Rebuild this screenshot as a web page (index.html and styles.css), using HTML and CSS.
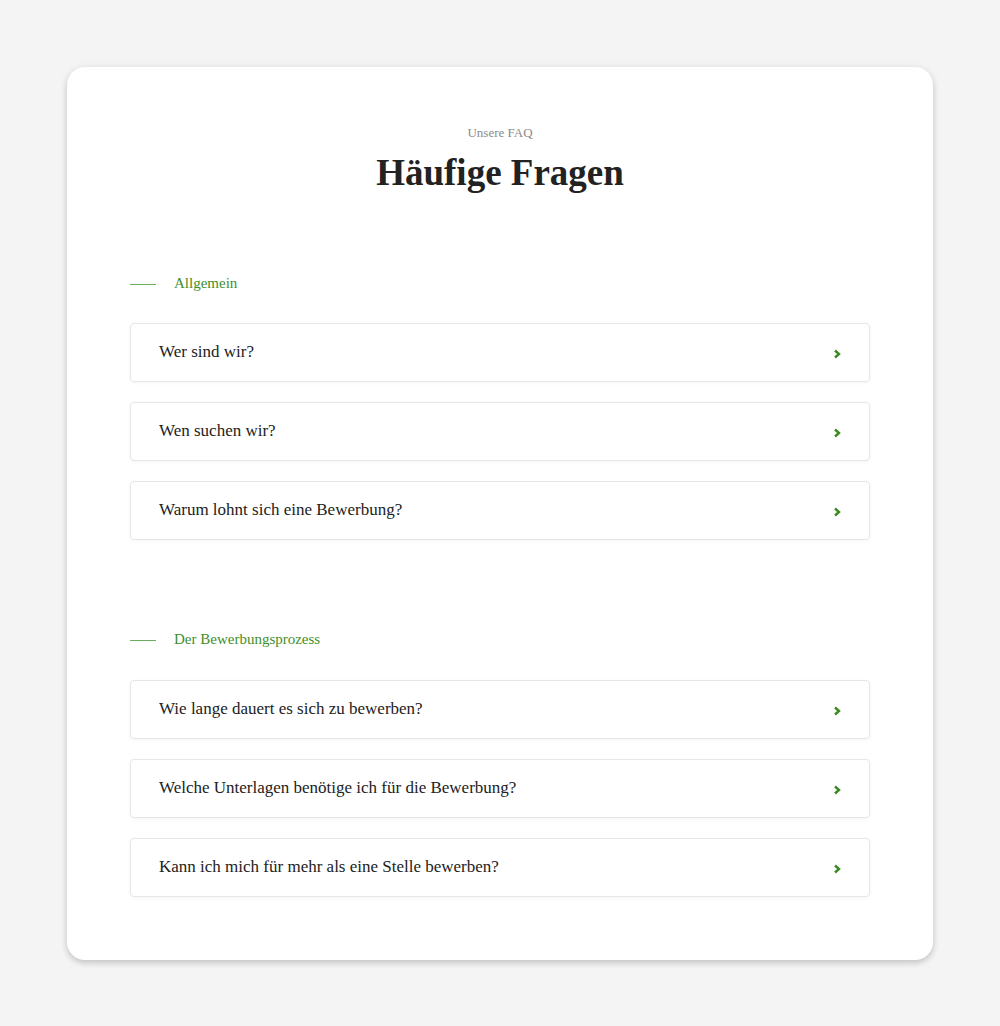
FILE: index.html
```html
<!DOCTYPE html>
<html>
<head>
    <title>FAQ</title>
    <meta name="viewport" content="width=device-width, initial-scale=1.0">
    <link rel="stylesheet" href="styles.css">
</head>
<body>
    <div class="card">
        <p class="eyebrow">Unsere FAQ</p>
        <h1>Häufige Fragen</h1>

        <section class="group">
            <div class="group-title"><span class="line"></span>Allgemein</div>
            <div class="item"><span>Wer sind wir?</span><svg class="chev" viewBox="0 0 8 10"><polyline points="2,1.5 6,5 2,8.5"/></svg></div>
            <div class="item"><span>Wen suchen wir?</span><svg class="chev" viewBox="0 0 8 10"><polyline points="2,1.5 6,5 2,8.5"/></svg></div>
            <div class="item"><span>Warum lohnt sich eine Bewerbung?</span><svg class="chev" viewBox="0 0 8 10"><polyline points="2,1.5 6,5 2,8.5"/></svg></div>
        </section>

        <section class="group second">
            <div class="group-title"><span class="line"></span>Der Bewerbungsprozess</div>
            <div class="item"><span>Wie lange dauert es sich zu bewerben?</span><svg class="chev" viewBox="0 0 8 10"><polyline points="2,1.5 6,5 2,8.5"/></svg></div>
            <div class="item"><span>Welche Unterlagen benötige ich für die Bewerbung?</span><svg class="chev" viewBox="0 0 8 10"><polyline points="2,1.5 6,5 2,8.5"/></svg></div>
            <div class="item"><span>Kann ich mich für mehr als eine Stelle bewerben?</span><svg class="chev" viewBox="0 0 8 10"><polyline points="2,1.5 6,5 2,8.5"/></svg></div>
        </section>
    </div>
</body>
</html>
```

FILE: styles.css
```css
body {
    background-color: #f4f4f4;
    font-family: 'Liberation Serif', serif;
    color: #222;
    margin: 0;
    padding: 67px 67px;
}

.card {
    background-color: white;
    border-radius: 18px;
    padding: 58px 63px 63px;
    box-shadow: 0 3px 6px rgba(0, 0, 0, 0.18), 0 0 12px rgba(0, 0, 0, 0.04);
}

.eyebrow {
    margin: 0;
    text-align: center;
    font-size: 13px;
    line-height: 16px;
    color: #8a8a8a;
}

h1 {
    margin: 10px 0 0;
    text-align: center;
    font-size: 37px;
    line-height: 44px;
    font-weight: bold;
    color: #222;
}

.group {
    margin-top: 78px;
}

.group.second {
    margin-top: 89px;
}

.group-title {
    display: flex;
    align-items: center;
    font-size: 15px;
    line-height: 20px;
    color: #3f8f2c;
    margin-bottom: 30px;
}

.second .group-title {
    margin-bottom: 31px;
}

.line {
    width: 26px;
    height: 1px;
    background-color: #6aad5a;
    margin-right: 18px;
    margin-top: 2px;
}

.item {
    display: flex;
    align-items: center;
    justify-content: space-between;
    border: 1px solid #e6e6e6;
    border-radius: 4px;
    padding: 15px 28px 17px;
    font-size: 17px;
    line-height: 25px;
    margin-bottom: 20px;
    box-shadow: 0 1px 4px rgba(0, 0, 0, 0.04);
}

.item:last-child {
    margin-bottom: 0;
}

.chev {
    width: 8px;
    height: 10px;
    margin-top: 4px;
    fill: none;
    stroke: #3a8a1f;
    stroke-width: 2.4;
}
```
